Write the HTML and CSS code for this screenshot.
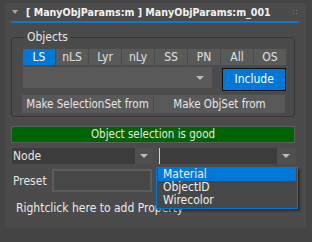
FILE: index.html
```html
<!DOCTYPE html>
<html>
	<head>
		<meta charset="utf-8">
		<title>ManyObjParams</title>
		<link rel="stylesheet" href="styles.css">
	</head>
	<body>
		<div class="rollout">
			<div class="head">
				<span class="tri"></span>
				<span class="title">[ ManyObjParams:m ] ManyObjParams:m_001</span>
				<span class="grip"></span>
			</div>
			<fieldset class="group">
				<legend>Objects</legend>
				<div class="tabs">
					<span class="tab on">LS</span>
					<span class="tab">nLS</span>
					<span class="tab">Lyr</span>
					<span class="tab">nLy</span>
					<span class="tab">SS</span>
					<span class="tab">PN</span>
					<span class="tab">All</span>
					<span class="tab">OS</span>
				</div>
				<div class="pick">
					<div class="combo"><span class="arr"></span></div>
					<span class="include">Include</span>
				</div>
				<div class="makes">
					<span class="btn">Make SelectionSet from</span>
					<span class="btn">Make ObjSet from</span>
				</div>
			</fieldset>
			<div class="status">Object selection is good</div>
			<div class="drops">
				<div class="drop"><span class="val">Node</span><span class="darr"><span class="arr"></span></span></div>
				<div class="drop second"><span class="val caret"></span><span class="darr"><span class="arr"></span></span>
					<ul class="list">
						<li class="sel">Material</li>
						<li>ObjectID</li>
						<li>Wirecolor</li>
					</ul>
				</div>
			</div>
			<div class="preset">
				<span class="lbl">Preset</span>
				<span class="field"></span>
			</div>
			<p class="hint">Rightclick here to add Property</p>
		</div>
	</body>
</html>
```

FILE: styles.css
```css
* {
  padding: 0;
  margin: 0;
  box-sizing: border-box;
  list-style: none;
}

body {
  background: #444444;
  font-family: "DejaVu Sans Condensed", "DejaVu Sans", sans-serif;
  font-size: 11.5px;
  color: #e6e6e6;
}

.rollout {
  width: 301px;
  height: 225px;
  margin: 3px 0 0 5px;
  background: #4b4b4b;
  border-radius: 3px;
  padding: 0 6px;
}

.head {
  display: flex;
  align-items: center;
  height: 20px;
  border-bottom: 2px solid #0a78d4;
  margin-right: 1px;
}

.tri {
  width: 0;
  height: 0;
  margin: 0 8px 0 1px;
  border-left: 3px solid transparent;
  border-right: 3px solid transparent;
  border-top: 4px solid #a8a8a8;
}

.title {
  flex: 1;
  white-space: nowrap;
  font-weight: bold;
  font-size: 10.6px;
  color: #f2f2f2;
}

.grip {
  width: 6px;
  height: 6px;
  margin-right: 1px;
  background: radial-gradient(circle, #7a7a7a 0.8px, transparent 1px) 0 0 / 3px 3px;
}

.group {
  margin: 7px 5px 0 0;
  padding: 5px 8px 3px 11px;
  border: 1px solid #353535;
  border-radius: 3px;
  min-width: 0;
}

.group legend {
  padding: 0 3px;
  margin-left: 1px;
  font-size: 12px;
  color: #e6e6e6;
}

.tabs {
  display: flex;
  gap: 1px;
}

.tab {
  width: 32px;
  height: 16px;
  line-height: 16px;
  text-align: center;
  font-size: 12px;
  background: #5a5a5a;
  color: #e0e0e0;
}

.tab.on {
  background: #0078d7;
  color: #fff;
}

.pick {
  display: flex;
  align-items: flex-start;
  margin-top: 2px;
}

.combo {
  position: relative;
  width: 190px;
  height: 21px;
  background: #595959;
}

.combo .arr {
  position: absolute;
  right: 8px;
  top: 9px;
}

.arr {
  display: block;
  width: 0;
  height: 0;
  border-left: 4px solid transparent;
  border-right: 4px solid transparent;
  border-top: 4px solid #bdbdbd;
}

.include {
  width: 64px;
  height: 23px;
  margin: 1px 0 0 10px;
  line-height: 21px;
  text-align: center;
  font-size: 12px;
  background: #0078d7;
  border: 1px solid #101010;
  color: #fff;
}

.makes {
  display: flex;
  gap: 1px;
  margin: 4px 0 0 -1px;
}

.btn {
  width: 131px;
  height: 18px;
  line-height: 18px;
  text-align: center;
  background: #595959;
  color: #e6e6e6;
}

.status {
  margin: 9px 5px 0 0;
  height: 17px;
  line-height: 15px;
  text-align: center;
  background: #006400;
  border: 1px solid #5e5e5e;
  color: #e8e8e8;
}

.drops {
  display: flex;
  gap: 3px;
  margin: 5px 5px 0 1px;
}

.drop {
  position: relative;
  display: flex;
  height: 16px;
}

.drop:first-child {
  width: 141px;
}

.drop.second {
  flex: 1;
}

.drop .val {
  flex: 1;
  background: #3c3c3c;
  line-height: 16px;
  padding-left: 1px;
  font-size: 12px;
}

.caret {
  border-left: 1px solid #d0d0d0;
  margin-left: 3px;
}

.darr {
  width: 18px;
  background: #4f4f4f;
  display: flex;
  align-items: center;
  justify-content: center;
}

.list {
  position: absolute;
  left: 0;
  top: 19px;
  width: 142px;
  padding: 0 1px 1px;
  background: #474747;
  border: 1px solid #0078d7;
  box-shadow: 2px 2px 2px rgba(0, 0, 0, 0.45);
  font-size: 12px;
  z-index: 2;
}

.list li {
  height: 13px;
  line-height: 13px;
  padding-left: 5px;
  color: #f0f0f0;
}

.list li.sel {
  background: #0078d7;
}

.preset {
  display: flex;
  align-items: center;
  margin: 5px 0 0 2px;
}

.lbl {
  width: 39px;
  font-size: 12px;
}

.field {
  width: 100px;
  height: 23px;
  background: #474747;
  border: 2px solid #5c5c5c;
}

.hint {
  margin: 9px 0 0 5px;
  font-size: 12px;
  color: #ececec;
}
```
